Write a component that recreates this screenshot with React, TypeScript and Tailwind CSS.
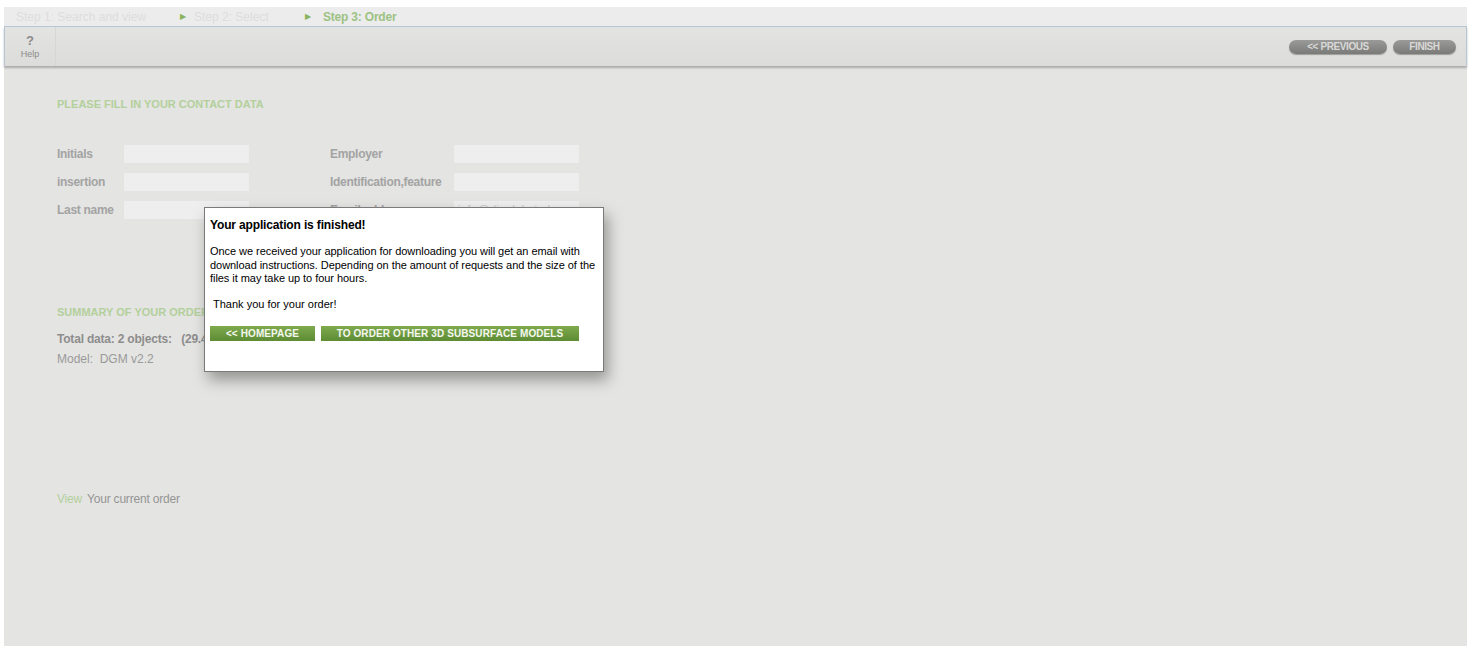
import React from 'react';

const Field = ({ label, value }: { label: string; value?: string }) => (
  <div className="flex items-center h-[28px]">
    <span className="w-[67px] text-[12px] font-bold text-[#a3a3a3] tracking-[-0.3px]">{label}</span>
    <div className="w-[125px] h-[18px] bg-[#eeeeee] text-[12px] text-[#c8c8c8] px-1 leading-[18px] overflow-hidden">{value}</div>
  </div>
);

export default function App() {
  return (
    <div className="w-[1472px] h-[652px] bg-white pt-[7px] pl-[4px] pr-[5px] pb-[6px] font-['Liberation_Sans',Arial,sans-serif] overflow-hidden">
      <div className="relative h-full flex flex-col">
        {/* steps */}
        <div className="h-[19px] bg-[#ececec] flex items-center text-[12px] text-[#dddddd] pl-[12px]">
          <span className="w-[164px]">Step 1: Search and view</span>
          <span className="text-[#86b35c] text-[8px] mr-[8px]">▶</span>
          <span className="w-[111px]">Step 2: Select</span>
          <span className="text-[#86b35c] text-[8px] mr-[12px]">▶</span>
          <span className="font-bold text-[#9cc283] tracking-[-0.2px]">Step 3: Order</span>
        </div>
        {/* toolbar */}
        <div className="h-[40px] border border-b-0 border-[#b7c6d4] bg-gradient-to-b from-[#e3e3e1] to-[#dcdcda] shadow-[0_2px_2px_rgba(0,0,0,0.25)] flex items-center relative z-10">
          <div className="w-[51px] h-full flex flex-col items-center justify-center border-r border-[#d6d6d4]">
            <span className="text-[13px] font-bold text-[#8c8c8c] leading-[14px]">?</span>
            <span className="text-[9px] text-[#8c8c8c] leading-[12px]">Help</span>
          </div>
          <div className="flex-1" />
          <div className="flex gap-[6px] pr-[10px]">
            <div className="w-[98px] h-[14px] rounded-full bg-gradient-to-b from-[#9a9a98] to-[#7a7a78] text-[10px] font-bold text-[#d8d8d6] flex items-center justify-center tracking-[-0.4px] shadow-[0_1px_1px_rgba(0,0,0,0.3)]">
              &lt;&lt; PREVIOUS
            </div>
            <div className="w-[63px] h-[14px] rounded-full bg-gradient-to-b from-[#9a9a98] to-[#7a7a78] text-[10px] font-bold text-[#d8d8d6] flex items-center justify-center tracking-[-0.4px] shadow-[0_1px_1px_rgba(0,0,0,0.3)]">
              FINISH
            </div>
          </div>
        </div>
        {/* main */}
        <div className="flex-1 bg-[#e4e4e2] pl-[53px] pt-[31px]">
          <h2 className="text-[11px] font-bold text-[#b3d09c] h-[14px] leading-[14px]">PLEASE FILL IN YOUR CONTACT DATA</h2>
          <div className="mt-[29px] flex">
            <div className="w-[273px]">
              <Field label="Initials" />
              <Field label="insertion" />
              <Field label="Last name" />
            </div>
            <div className="[&>div>span]:w-[124px]">
              <Field label="Employer" />
              <Field label="Identification,feature" />
              <Field label="Email address" value="info@dinoloket.nl" />
            </div>
          </div>
          <h2 className="mt-[81px] text-[11px] font-bold text-[#b3d09c] leading-[14px]">SUMMARY OF YOUR ORDER</h2>
          <div className="mt-[13px] text-[12px] font-bold text-[#8d8d8d] tracking-[-0.2px] leading-[14px]">
            Total data: 2 objects:&nbsp;&nbsp;&nbsp;(29.4 MB)
          </div>
          <div className="mt-[6px] text-[12px] text-[#9a9a9a] leading-[14px]">Model:&nbsp;&nbsp;DGM v2.2</div>
          <div className="mt-[126px] text-[12px] leading-[14px] tracking-[-0.2px]">
            <span className="text-[#b3d09c] mr-[5px]">View</span>
            <span className="text-[#959595]">Your current order</span>
          </div>
        </div>

        {/* dialog */}
        <div className="absolute left-[200px] top-[200px] w-[400px] h-[165px] bg-white border border-[#7a7a7a] shadow-[4px_8px_14px_rgba(0,0,0,0.35)] pl-[5px] pt-[10px] text-black">
          <div className="text-[12px] font-bold leading-[15px] tracking-[-0.15px]">Your application is finished!</div>
          <p className="mt-[12px] text-[11px] leading-[13.5px] w-[392px] tracking-[-0.05px]">
            Once we received your application for downloading you will get an email with download instructions. Depending on the amount of requests and the size of the files it may take up to four hours.
          </p>
          <p className="mt-[12px] ml-[3px] text-[11px] leading-[13px]">Thank you for your order!</p>
          <div className="mt-[15px] flex gap-[6px]">
            <button className="w-[105px] h-[15px] bg-gradient-to-b from-[#7faa4e] to-[#5d8c34] text-[#f4f8ee] text-[10px] font-bold leading-[15px] tracking-[0.1px] text-center">
              &lt;&lt; HOMEPAGE
            </button>
            <button className="w-[258px] h-[15px] bg-gradient-to-b from-[#7faa4e] to-[#5d8c34] text-[#f4f8ee] text-[10px] font-bold leading-[15px] tracking-[0.1px] text-center">
              TO ORDER OTHER 3D SUBSURFACE MODELS
            </button>
          </div>
        </div>
      </div>
    </div>
  );
}
